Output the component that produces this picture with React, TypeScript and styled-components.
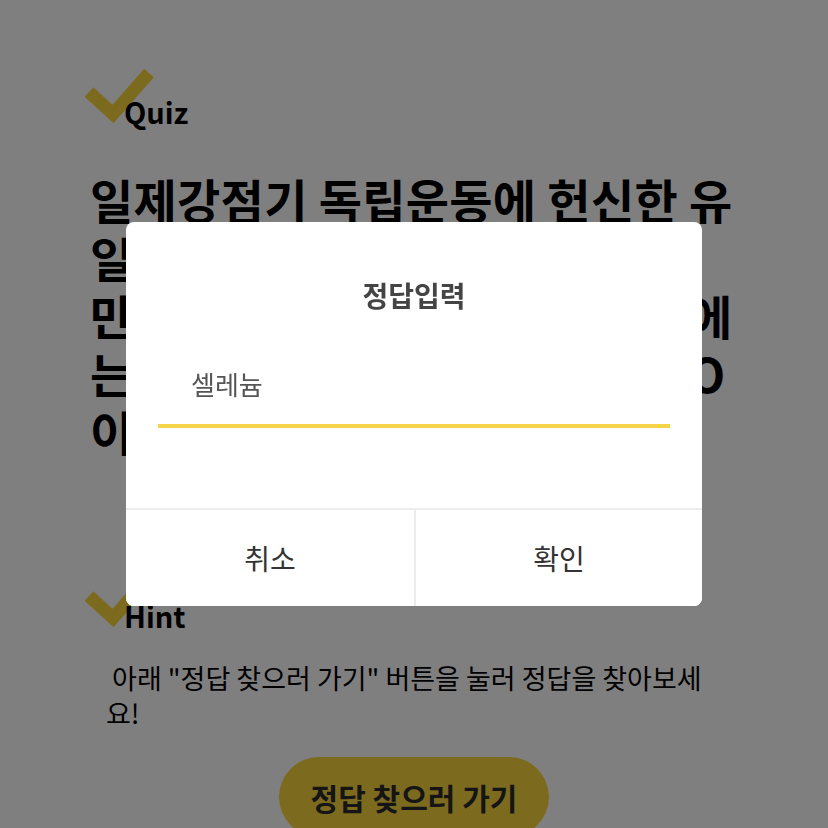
import styled, { createGlobalStyle } from "styled-components";

const GlobalStyle = createGlobalStyle`
  html, body {
    margin: 0;
    padding: 0;
    background: #ffffff;
    font-family: "Noto Sans CJK KR", "Noto Sans", sans-serif;
    color: #000;
  }
`

const Page = styled.main`
  padding: 70px 90px 0 90px;
  height: 828px;
  box-sizing: border-box;
  overflow: hidden;
`

const SectionTitle = styled.h2`
  position: relative;
  isolation: isolate;
  margin: 0;
  padding-left: 34px;
  font-size: 29px;
  font-weight: 700;
  line-height: 1;
  height: 56px;
  display: flex;
  align-items: flex-end;
`

const CheckMark = styled.svg`
  position: absolute;
  left: -4px;
  top: 0;
  z-index: -1;
  overflow: visible;
`

const Question = styled.h1`
  margin: 44px 0 0 0;
  font-size: 47px;
  font-weight: 700;
  letter-spacing: 0.3px;
  line-height: 58px;
  white-space: nowrap;
`

const HintBlock = styled.section`
  margin-top: 114px;
`

const HintText = styled.p`
  margin: 30px 0 0 16px;
  font-size: 27px;
  line-height: 35px;
  width: 620px;
  white-space: pre-wrap;
`

const GoButton = styled.button`
  display: block;
  margin: 27px auto 0 auto;
  width: 270px;
  height: 80px;
  border: none;
  border-radius: 40px;
  background: #f8d53e;
  font-family: inherit;
  font-size: 30px;
  font-weight: 700;
  color: #2a2a2a;
`

const Overlay = styled.div`
  position: fixed;
  inset: 0;
  background: rgba(0, 0, 0, 0.5);
  display: flex;
  align-items: center;
  justify-content: center;
`

const Dialog = styled.div`
  width: 576px;
  height: 384px;
  background: #fff;
  border-radius: 8px;
  display: flex;
  flex-direction: column;
  overflow: hidden;
`

const DialogBody = styled.div`
  flex: 1;
  padding: 56px 32px 0 32px;
  display: flex;
  flex-direction: column;
`

const DialogTitle = styled.h3`
  margin: 0;
  text-align: center;
  font-size: 28px;
  font-weight: 700;
  color: #444;
  line-height: 34px;
`

const AnswerInput = styled.input`
  margin-top: 52px;
  border: none;
  border-bottom: 4px solid #f6d44a;
  outline: none;
  padding: 2px 0 22px 33px;
  font-family: inherit;
  font-size: 26px;
  line-height: 36px;
  color: #555;
  background: transparent;
`

const ButtonRow = styled.div`
  display: grid;
  grid-template-columns: 1fr 1fr;
  height: 96px;
  border-top: 2px solid #ececec;
`

const DialogButton = styled.button<{ divider?: boolean }>`
  border: none;
  background: #fff;
  border-left: ${(p) => (p.divider ? "2px solid #ececec" : "none")};
  font-family: inherit;
  font-size: 28px;
  color: #333;
`

const Check = () => (
  <CheckMark width="72" height="60" viewBox="0 0 72 60">
    <path d="M3 22 L27 44 L63 3" fill="none" stroke="#f8d53e" strokeWidth="13" strokeLinejoin="miter" />
  </CheckMark>
)

export default function App() {
  return (
    <>
      <GlobalStyle />
      <Page>
        <SectionTitle>
          <Check />
          Quiz
        </SectionTitle>
        <Question>
          일제강점기 독립운동에 헌신한 유<br />
          일한 한국인 여성 독립운동가로<br />
          만주에서 활동했던 인물의 이름에<br />
          는 어떤 원소이름이 들어있을까O<br />
          이 원소는 무엇일까요?
        </Question>
        <HintBlock>
          <SectionTitle>
            <Check />
            Hint
          </SectionTitle>
          <HintText> 아래 "정답 찾으러 가기" 버튼을 눌러 정답을 찾아보세요!</HintText>
        </HintBlock>
        <GoButton>정답 찾으러 가기</GoButton>
      </Page>
      <Overlay>
        <Dialog>
          <DialogBody>
            <DialogTitle>정답입력</DialogTitle>
            <AnswerInput defaultValue="셀레늄" />
          </DialogBody>
          <ButtonRow>
            <DialogButton>취소</DialogButton>
            <DialogButton divider>확인</DialogButton>
          </ButtonRow>
        </Dialog>
      </Overlay>
    </>
  )
}
